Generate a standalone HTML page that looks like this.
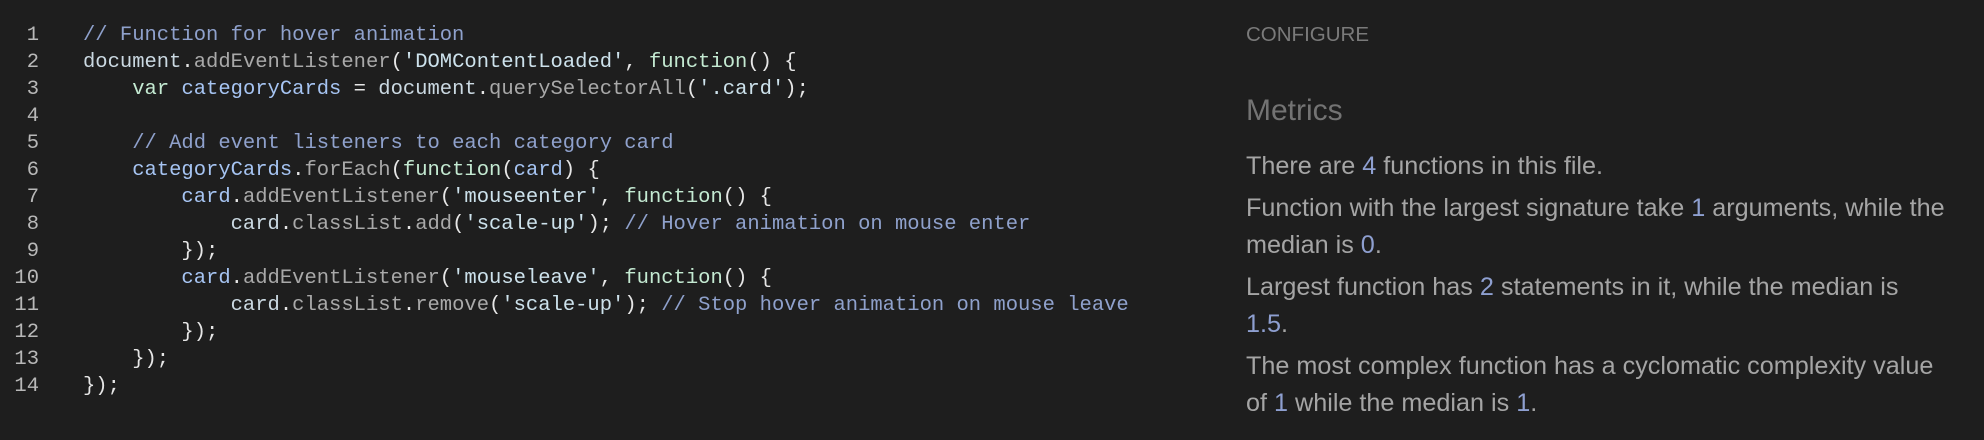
<!DOCTYPE html>
<html><head><meta charset="utf-8"><style>
html,body{margin:0;padding:0;background:#1e1e1e;width:1984px;height:440px;overflow:hidden}
.ln{position:absolute;left:0;width:39px;text-align:right;font:20.5px/27px "Liberation Mono",monospace;color:#b8b8b8}
.code{position:absolute;left:83px;font:20.5px/27px "Liberation Mono",monospace;color:#e6e6e6;white-space:pre}
.c{color:#8fa1cc}.k{color:#c4ead2}.s{color:#cde2ec}.m{color:#a9a9a9}.v{color:#a6c4f2}.d{color:#cbd9e2}
.r{position:absolute;left:1246px;font-family:"Liberation Sans",Arial,sans-serif;color:#a5a5a5}
.n{color:#8e9fd0}
</style></head><body>
<div class="ln" style="top:22px">1<br>2<br>3<br>4<br>5<br>6<br>7<br>8<br>9<br>10<br>11<br>12<br>13<br>14</div>
<div class="code" style="top:22px"><span class="c">// Function for hover animation</span>
<span class="d">document</span>.<span class="m">addEventListener</span>(<span class="s">'DOMContentLoaded'</span>, <span class="k">function</span>() {
    <span class="k">var</span> <span class="v">categoryCards</span> = <span class="d">document</span>.<span class="m">querySelectorAll</span>(<span class="s">'.card'</span>);

    <span class="c">// Add event listeners to each category card</span>
    <span class="v">categoryCards</span>.<span class="m">forEach</span>(<span class="k">function</span>(<span class="v">card</span>) {
        <span class="v">card</span>.<span class="m">addEventListener</span>(<span class="s">'mouseenter'</span>, <span class="k">function</span>() {
            <span class="d">card</span>.<span class="m">classList</span>.<span class="m">add</span>(<span class="s">'scale-up'</span>); <span class="c">// Hover animation on mouse enter</span>
        });
        <span class="v">card</span>.<span class="m">addEventListener</span>(<span class="s">'mouseleave'</span>, <span class="k">function</span>() {
            <span class="d">card</span>.<span class="m">classList</span>.<span class="m">remove</span>(<span class="s">'scale-up'</span>); <span class="c">// Stop hover animation on mouse leave</span>
        });
    });
});</div>
<div class="r" style="top:22px;font-size:20.5px;line-height:26px;color:#7a7a7a">CONFIGURE</div>
<div class="r" style="top:93px;font-size:30px;line-height:36px;color:#737373">Metrics</div>
<div class="r" style="top:148px;font-size:25.2px;line-height:37px;white-space:nowrap">
<div style="margin-bottom:5px">There are <span class="n">4</span> functions in this file.</div>
<div style="margin-bottom:5px">Function with the largest signature take <span class="n">1</span> arguments, while the<br>median is <span class="n">0</span>.</div>
<div style="margin-bottom:5px">Largest function has <span class="n">2</span> statements in it, while the median is<br><span class="n">1.5</span>.</div>
<div>The most complex function has a cyclomatic complexity value<br>of <span class="n">1</span> while the median is <span class="n">1</span>.</div>
</div>
</body></html>
